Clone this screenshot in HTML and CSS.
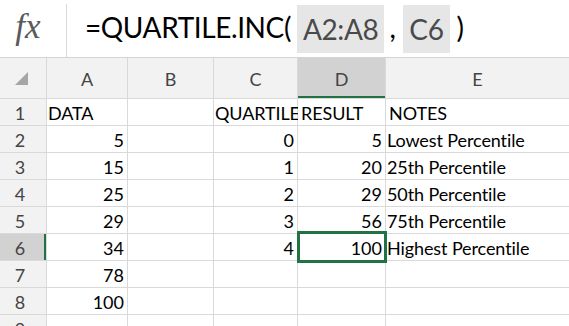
FILE: index.html
```html
<!DOCTYPE html>
<html>
<head>
<meta charset="utf-8">
<link rel="stylesheet" href="styles.css">
</head>
<body>
<div class="fbar">
  <div class="fx">fx</div>
  <div class="formula">=QUARTILE.INC(<span class="ref ref-a">A2:A8</span><span class="comma">,</span><span class="ref ref-c">C6</span><span class="close">)</span></div>
</div>
<div class="grid">
  <div class="hd corner"><svg width="13" height="13" viewBox="0 0 13 13"><polygon points="13,0 13,13 0,13" fill="#a6a6a6"/></svg></div>
  <div class="hd col">A</div>
  <div class="hd col">B</div>
  <div class="hd col">C</div>
  <div class="hd col sel-col">D</div>
  <div class="hd col">E</div>

  <div class="hd rn">1</div><div class="c l">DATA</div><div class="c"></div><div class="c l">QUARTILE</div><div class="c l">RESULT</div><div class="c l">NOTES</div>
  <div class="hd rn">2</div><div class="c r">5</div><div class="c"></div><div class="c r">0</div><div class="c r">5</div><div class="c l">Lowest Percentile</div>
  <div class="hd rn">3</div><div class="c r">15</div><div class="c"></div><div class="c r">1</div><div class="c r">20</div><div class="c l">25th Percentile</div>
  <div class="hd rn">4</div><div class="c r">25</div><div class="c"></div><div class="c r">2</div><div class="c r">29</div><div class="c l">50th Percentile</div>
  <div class="hd rn">5</div><div class="c r">29</div><div class="c"></div><div class="c r">3</div><div class="c r">56</div><div class="c l">75th Percentile</div>
  <div class="hd rn sel-row">6</div><div class="c r">34</div><div class="c"></div><div class="c r">4</div><div class="c r active">100<span class="selbox"></span></div><div class="c l">Highest Percentile</div>
  <div class="hd rn">7</div><div class="c r">78</div><div class="c"></div><div class="c"></div><div class="c"></div><div class="c"></div>
  <div class="hd rn">8</div><div class="c r">100</div><div class="c"></div><div class="c"></div><div class="c"></div><div class="c"></div>
  <div class="hd rn">9</div><div class="c"></div><div class="c"></div><div class="c"></div><div class="c"></div><div class="c"></div>
</div>
</body>
</html>
```
FILE: styles.css
```css
html, body {
  margin: 0;
  padding: 0;
  background: #fff;
  overflow: hidden;
}
body {
  width: 569px;
  height: 326px;
  font-variant-ligatures: none;
}
.fbar {
  display: flex;
  height: 57px;
  align-items: stretch;
}
.fx {
  width: 67px;
  box-sizing: border-box;
  border-right: 1px solid #dadada;
  margin-top: 4px;
  font-family: "Liberation Serif", serif;
  font-style: italic;
  font-size: 35px;
  color: #5a5a5a;
  display: flex;
  align-items: center;
  justify-content: center;
  padding-bottom: 8px;
  padding-right: 10px;
}
.formula {
  display: flex;
  align-items: center;
  padding-left: 18px;
  font-family: Lato, "Open Sans", sans-serif;
  font-size: 28px;
  letter-spacing: -0.4px;
  color: #000;
  white-space: nowrap;
  padding-bottom: 4px;
}
.ref {
  background: #e6e6e6;
  color: #4a4a4a;
  height: 48px;
  display: flex;
  align-items: center;
  padding: 0 6px;
  margin-top: 4px;
  box-sizing: border-box;
}
.ref-a { margin-left: 6px; }
.comma { margin: 0 8px 0 5px; }
.close { margin-left: 7px; }

.grid {
  display: grid;
  grid-template-columns: 46px 80px 85px 83px 87px 1fr;
  grid-template-rows: 40px repeat(9, 26px);
  gap: 1px;
  background: #d9d9d9;
  border-top: 1px solid #d4d4d4;
  font-family: Lato, "Open Sans", sans-serif;
  font-size: 18px;
}
.hd {
  background: #f2f2f2;
  color: #444;
  display: flex;
  align-items: center;
  justify-content: center;
  position: relative;
}
.col { padding-top: 1px; }
.corner {
  justify-content: flex-start;
  align-items: flex-start;
}
.corner svg {
  margin: 14px 0 0 15px;
}
.rn {
  padding-right: 6px;
  padding-top: 2px;
}
.sel-col {
  background: #d2d2d2;
  box-shadow: inset 0 -2px 0 #217346;
}
.sel-row {
  background: #d2d2d2;
  box-shadow: inset -2px 0 0 #217346;
}
.c {
  background: #fff;
  color: #000;
  display: flex;
  align-items: flex-end;
  padding-bottom: 2px;
  white-space: nowrap;
  position: relative;
  line-height: 20px;
}
.c.r {
  justify-content: flex-end;
  padding-right: 3px;
}
.c.l {
  justify-content: flex-start;
  padding-left: 1px;
  letter-spacing: -0.1px;
}
.c.l + .c.l { padding-left: 3px; }
.selbox {
  position: absolute;
  z-index: 2;
  left: -1px;
  right: -2px;
  top: -3px;
  bottom: -3px;
  border: 3px solid #217346;
  box-sizing: border-box;
}
```
